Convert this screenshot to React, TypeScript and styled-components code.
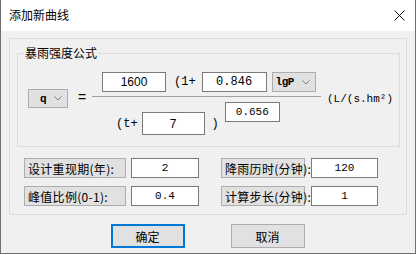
import React from "react";
import styled, { createGlobalStyle } from "styled-components";

const GlobalStyle = createGlobalStyle`
  html, body {
    margin: 0;
    padding: 0;
    background: #ffffff;
  }
  * {
    box-sizing: border-box;
  }
`;

const CJK = `"Noto Sans CJK SC", "Noto Sans", sans-serif`;
const MONO = `"Liberation Mono", "Noto Sans CJK SC", monospace`;

const Window = styled.div`
  width: 416px;
  height: 254px;
  border: 1px solid #6f6f6f;
  border-top: 0;
  background: #f0f0f0;
  display: flex;
  flex-direction: column;
  font-family: ${CJK};
  color: #000;
`;

const TitleBar = styled.div`
  height: 31px;
  background: #ffffff;
  display: flex;
  align-items: center;
  justify-content: space-between;
  padding: 0 9px 1px 8px;
`;

const Title = styled.span`
  font-size: 12px;
  line-height: 16px;
`;

const CloseIcon = styled.svg`
  width: 11px;
  height: 11px;
  margin-right: 1px;
`;

const Body = styled.div`
  flex: 1;
  padding: 7px 8px 0 8px;
  display: flex;
  flex-direction: column;
`;

const Frame = styled.div`
  width: 398px;
  height: 177px;
  border: 1px solid #dcdcdc;
  padding: 14px 6px 0 7px;
`;

const GroupBox = styled.div`
  position: relative;
  width: 383px;
  height: 94px;
  border: 1px solid #dcdcdc;
  padding: 18px 0 0 10px;
`;

const Legend = styled.span`
  position: absolute;
  top: -9px;
  left: 6px;
  padding: 0 1px;
  background: #f0f0f0;
  font-size: 12px;
  line-height: 16px;
`;

const FormulaRow = styled.div`
  display: flex;
  align-items: flex-start;
`;

const Combo = styled.div<{ $w: number; $h: number; $top?: number; $left?: number; $padLeft: number }>`
  width: ${(p) => p.$w}px;
  height: ${(p) => p.$h}px;
  margin-top: ${(p) => p.$top ?? 0}px;
  margin-left: ${(p) => p.$left ?? 0}px;
  border: 1px solid #adadad;
  background: #e1e1e1;
  display: flex;
  align-items: center;
  justify-content: space-between;
  padding: 0 5px 0 ${(p) => p.$padLeft}px;
  font-family: ${MONO};
  font-size: 11px;
  font-weight: 600;
  letter-spacing: -0.5px;
`;

const Chevron = () => (
  <svg width="8" height="5" viewBox="0 0 8 5">
    <polyline points="0.5,0.5 4,4 7.5,0.5" fill="none" stroke="#7a7a7a" strokeWidth="1" />
  </svg>
);

const Equals = styled.span`
  width: 24px;
  height: 20px;
  margin-top: 15px;
  padding-left: 4px;
  text-align: center;
  font-family: "Liberation Sans", sans-serif;
  font-size: 14px;
  line-height: 20px;
`;

const Fraction = styled.div`
  width: 229px;
  display: flex;
  flex-direction: column;
`;

const Numerator = styled.div`
  display: flex;
  align-items: center;
  padding-left: 10px;
  height: 20px;
`;

const FractionLine = styled.div`
  margin-top: 4px;
  height: 1px;
  background: #a0a0a0;
`;

const Denominator = styled.div`
  display: flex;
  align-items: flex-start;
  padding-left: 24px;
`;

const Op = styled.span<{ $left?: number; $top?: number }>`
  margin-left: ${(p) => p.$left ?? 0}px;
  margin-top: ${(p) => p.$top ?? 0}px;
  font-family: ${MONO};
  font-size: 12px;
  line-height: 16px;
  white-space: nowrap;
`;

const Field = styled.div<{
  $w: number;
  $h?: number;
  $left?: number;
  $top?: number;
  $mono?: boolean;
  $size?: number;
}>`
  width: ${(p) => p.$w}px;
  height: ${(p) => p.$h ?? 20}px;
  margin-left: ${(p) => p.$left ?? 0}px;
  margin-top: ${(p) => p.$top ?? 0}px;
  border: 1px solid #7a7a7a;
  background: #ffffff;
  display: flex;
  align-items: center;
  justify-content: center;
  font-family: ${(p) => (p.$mono ? MONO : `"Liberation Sans", sans-serif`)};
  font-size: ${(p) => p.$size ?? 12}px;
  line-height: 1;
`;

const Unit = styled.span`
  margin: 19px 0 0 6px;
  font-family: ${MONO};
  font-size: 11px;
  line-height: 16px;
  white-space: nowrap;
`;

const ParamGrid = styled.div`
  margin: 11px 0 0 7px;
  display: grid;
  grid-template-columns: 102px 68px 101px 68px;
  grid-auto-rows: 20px;
  row-gap: 8px;
  column-gap: 5px;

  & > :nth-child(4n + 3) {
    margin-left: 17px;
  }
  & > :nth-child(4n + 4) {
    margin-left: 1px;
  }
`;

const ParamLabel = styled.div`
  border: 1px solid #adadad;
  background: #e1e1e1;
  padding-left: 3px;
  display: flex;
  align-items: center;
  font-size: 12px;
  letter-spacing: 0.3px;
  white-space: nowrap;
`;

const ParamValue = styled.div`
  border: 1px solid #7a7a7a;
  background: #ffffff;
  display: flex;
  align-items: center;
  justify-content: center;
  font-family: ${MONO};
  font-size: 11px;
`;

const ButtonRow = styled.div`
  margin-top: 9px;
  display: flex;
  justify-content: center;
  gap: 46px;
  padding-right: 1px;
`;

const Button = styled.div<{ $primary?: boolean }>`
  width: 74px;
  height: 24px;
  border: ${(p) => (p.$primary ? "2px solid #0078d7" : "1px solid #adadad")};
  background: #e1e1e1;
  display: flex;
  align-items: center;
  justify-content: center;
  font-size: 12px;
`;

const params = [
  { label: "设计重现期(年):", value: "2" },
  { label: "降雨历时(分钟):", value: "120" },
  { label: "峰值比例(0-1):", value: "0.4" },
  { label: "计算步长(分钟):", value: "1" },
];

const App: React.FC = () => {
  return (
    <>
      <GlobalStyle />
      <Window>
        <TitleBar>
          <Title>添加新曲线</Title>
          <CloseIcon viewBox="0 0 11 11">
            <line x1="0.5" y1="0.5" x2="10.5" y2="10.5" stroke="#111" strokeWidth="1" />
            <line x1="10.5" y1="0.5" x2="0.5" y2="10.5" stroke="#111" strokeWidth="1" />
          </CloseIcon>
        </TitleBar>
        <Body>
          <Frame>
            <GroupBox>
              <Legend>暴雨强度公式</Legend>
              <FormulaRow>
                <Combo $w={40} $h={19} $top={17} $padLeft={11}>
                  <span>q</span>
                  <Chevron />
                </Combo>
                <Equals>=</Equals>
                <Fraction>
                  <Numerator>
                    <Field $w={64}>1600</Field>
                    <Op $left={8}>(1+</Op>
                    <Field $w={65} $left={6} $mono>0.846</Field>
                    <Combo $w={44} $h={20} $left={5} $padLeft={3}>
                      <span>lgP</span>
                      <Chevron />
                    </Combo>
                  </Numerator>
                  <FractionLine />
                  <Denominator>
                    <Op $top={19}>(t+</Op>
                    <Field $w={63} $h={23} $left={4} $top={15}>7</Field>
                    <Op $left={7} $top={19}>)</Op>
                    <Field $w={55} $left={6} $top={5} $mono $size={11}>0.656</Field>
                  </Denominator>
                </Fraction>
                <Unit>(L/(s.hm²)</Unit>
              </FormulaRow>
            </GroupBox>
            <ParamGrid>
              {params.map((p) => (
                <React.Fragment key={p.label}>
                  <ParamLabel>{p.label}</ParamLabel>
                  <ParamValue>{p.value}</ParamValue>
                </React.Fragment>
              ))}
            </ParamGrid>
          </Frame>
          <ButtonRow>
            <Button $primary>确定</Button>
            <Button>取消</Button>
          </ButtonRow>
        </Body>
      </Window>
    </>
  );
};

export default App;
